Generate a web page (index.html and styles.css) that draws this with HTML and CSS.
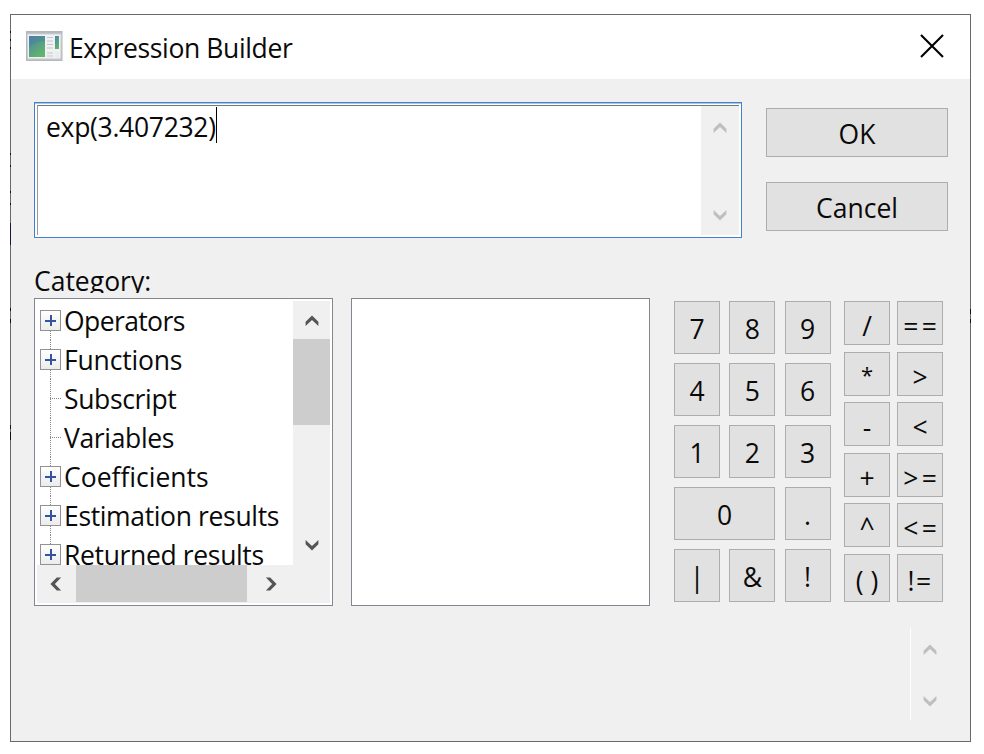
FILE: index.html
```
<!DOCTYPE html>
<html lang="en">
<head>
<meta charset="utf-8">
<title>Expression Builder</title>
<link rel="stylesheet" href="styles.css">
</head>
<body>
<svg width="0" height="0" class="defs">
  <symbol id="up" viewBox="0 0 14 12"><path d="M0.6 6.8 7 0.4l6.4 6.4v4.3L7 4.9 0.6 11.1z" fill="currentColor"/></symbol>
  <symbol id="down" viewBox="0 0 14 12"><path d="M0.6 5.2 7 11.6l6.4-6.4V0.9L7 7.1 0.6 0.9z" fill="currentColor"/></symbol>
  <symbol id="left" viewBox="0 0 12 14"><path d="M6.8 0.6 0.4 7l6.4 6.4h4.3L4.9 7l6.2-6.4z" fill="currentColor"/></symbol>
  <symbol id="right" viewBox="0 0 12 14"><path d="M5.2 0.6 11.6 7l-6.4 6.4H0.9L7.1 7 0.9 0.6z" fill="currentColor"/></symbol>
  <linearGradient id="pane" x1="0" y1="0" x2="0.6" y2="1"><stop offset="0" stop-color="#4b82a6"/><stop offset="1" stop-color="#62b56c"/></linearGradient>
  <linearGradient id="frame" x1="0" y1="0" x2="0" y2="1"><stop offset="0" stop-color="#a9afb6"/><stop offset="0.12" stop-color="#d3d6da"/><stop offset="1" stop-color="#c2c4ca"/></linearGradient>
</svg>
<main class="window">
  <header class="titlebar">
    <svg class="app-icon" width="37" height="31" viewBox="0 0 37 31">
      <rect x="0.5" y="0.5" width="35.500" height="29" fill="url(#frame)" stroke="#b4b7bd"/>
      <rect x="2" y="3.500" width="32.500" height="24" fill="#f0f1f2"/>
      <rect x="3" y="5" width="16" height="21" fill="url(#pane)"/>
      <path d="M3 16Q10 10 19 10V5H3z" fill="#477da4" opacity=".4"/>
      <path d="M21 6.500h6M21 10h6M21 13.500h6M21 17h6M21 22h6M21 25h6" stroke="#c5c8cb"/>
      <rect x="29" y="5" width="4" height="13" fill="url(#pane)"/>
      <path d="M29 22h4M29 25h4" stroke="#dfe1e3"/>
    </svg>
    <h1 class="title">Expression Builder</h1>
    <svg class="close" width="24" height="24" viewBox="0 0 24 24"><path d="M1 1 23 23M23 1 1 23" stroke="#000" stroke-width="2.100"/></svg>
  </header>
  <div class="content">
    <section class="top">
      <div class="editor">
        <div class="editor-text"><span class="expr">exp(3.407232)</span><i class="caret"></i></div>
        <div class="editor-scroll">
          <svg width="14" height="12"><use href="#up"/></svg>
          <svg width="14" height="12"><use href="#down"/></svg>
        </div>
      </div>
      <div class="actions">
        <button class="btn">OK</button>
        <button class="btn">Cancel</button>
      </div>
    </section>
    <div class="label">Category:</div>
    <section class="main">
      <div class="tree">
        <ul class="rows">
          <li class="node first"><i class="box"></i><span class="tightest">Operators</span></li>
          <li class="node"><i class="box"></i><span class="snug">Functions</span></li>
          <li class="leaf"><span class="tight">Subscript</span></li>
          <li class="leaf"><span class="tight">Variables</span></li>
          <li class="node"><i class="box"></i><span>Coefficients</span></li>
          <li class="node"><i class="box"></i><span class="tight">Estimation results</span></li>
          <li class="node"><i class="box"></i><span class="tight">Returned results</span></li>
        </ul>
        <div class="vscroll">
          <svg width="14" height="12"><use href="#up"/></svg>
          <div class="vthumb"></div>
          <svg class="end" width="14" height="12"><use href="#down"/></svg>
        </div>
        <div class="hscroll">
          <svg width="12" height="14"><use href="#left"/></svg>
          <div class="hthumb"></div>
          <svg width="12" height="14"><use href="#right"/></svg>
        </div>
      </div>
      <div class="list"></div>
      <div class="digits">
        <button class="btn">7</button><button class="btn">8</button><button class="btn">9</button>
        <button class="btn">4</button><button class="btn">5</button><button class="btn">6</button>
        <button class="btn">1</button><button class="btn">2</button><button class="btn">3</button>
        <button class="btn zero">0</button><button class="btn">.</button>
        <button class="btn">|</button><button class="btn">&amp;</button><button class="btn">!</button>
      </div>
      <div class="ops">
        <button class="btn">/</button><button class="btn wide">==</button>
        <button class="btn star">*</button><button class="btn">&gt;</button>
        <button class="btn">-</button><button class="btn">&lt;</button>
        <button class="btn">+</button><button class="btn wide">&gt;=</button>
        <button class="btn caret-key">^</button><button class="btn wide">&lt;=</button>
        <button class="btn paren">()</button><button class="btn ne">!=</button>
      </div>
    </section>
    <footer class="status">
      <div class="status-scroll">
        <svg width="14" height="12"><use href="#up"/></svg>
        <svg width="14" height="12"><use href="#down"/></svg>
      </div>
    </footer>
  </div>
</main>
</body>
</html>
```

FILE: styles.css
```
* { box-sizing: border-box; margin: 0; padding: 0; }
body { background: #fff; font-family: "Open Sans", "Noto Sans", sans-serif; font-size: 26.5px; color: #0a0a0a; overflow: hidden; }
.defs { position: absolute; }
svg { display: block; flex: none; }
.window { margin: 14px 0 0 10px; width: 961px; height: 728px; border: 1px solid #69696b; background: #f0f0f0; position: relative; }
/* dark specks on the window's outer edges */
.window::before { content: ""; position: absolute; left: -1px; top: 0; width: 1px; height: 440px;
  background: linear-gradient(#111, #111) 0 16px / 1px 2px, linear-gradient(#111, #111) 0 24px / 1px 2px, linear-gradient(#111, #111) 0 32px / 1px 2px, linear-gradient(#111, #111) 0 138px / 1px 2px, linear-gradient(#111, #111) 0 150px / 1px 2px, linear-gradient(#111, #111) 0 176px / 1px 2px, linear-gradient(#111, #111) 0 188px / 1px 2px, linear-gradient(#17173f, #17173f) 0 208px / 1px 22px, linear-gradient(#111, #111) 0 293px / 1px 3px, linear-gradient(#111, #111) 0 304px / 1px 4px, linear-gradient(#111, #111) 0 410px / 1px 4px, linear-gradient(#111, #111) 0 417px / 1px 8px;
  background-repeat: no-repeat; }
.window::after { content: ""; position: absolute; right: -1px; top: 294px; width: 1px; height: 14px; background: linear-gradient(#111 5px, transparent 5px 10px, #111 10px); }
.titlebar { height: 64px; background: #fff; display: flex; align-items: flex-start; padding: 16px 26px 0 15px; }
.title { font-size: inherit; font-weight: 400; line-height: 34px; padding-left: 6px; flex: 1; white-space: nowrap; letter-spacing: -0.38px; }
.close { margin-top: 3px; }
.content { padding: 23px 22px 0 23px; }
.top { display: flex; height: 136px; justify-content: space-between; }
.editor { width: 708px; height: 136px; border: 1px solid #4381cb; padding: 1px 2px 2px; background: #fff; box-shadow: inset 0 1px #a6c8ee; display: flex; }
.editor-text { flex: 1; border-top: 1px solid #777; border-left: 1px solid #999; margin-top: 1px; padding: 1px 0 0 8px; line-height: 41px; display: flex; height: 130px; }
.expr { letter-spacing: -0.3px; }
.caret { width: 1px; height: 36px; background: #000; }
.editor-scroll { width: 38px; margin-top: 1px; border-top: 1px solid #777; background: #f0f0f0; display: flex; flex-direction: column; align-items: center; justify-content: space-between; padding: 16px 0 14px; color: #bfbfbf; }
.actions { display: flex; flex-direction: column; gap: 25px; padding-top: 6px; }
.btn { border: 1px solid #adadad; background: #e1e1e1; font: inherit; color: inherit; display: flex; align-items: center; justify-content: center; white-space: nowrap; min-width: 0; overflow: hidden; }
.actions .btn { width: 182px; height: 49px; padding-top: 3px; }
.label { margin-top: 27px; height: 28px; line-height: 33px; overflow: hidden; }
.main { margin-top: 5px; display: flex; height: 308px; }
.tree { width: 299px; border: 1px solid #828790; background: #f0f0f0; box-shadow: inset 0 0 0 2px #fff; display: grid; grid-template: 264px 37px / 256px 37px; padding: 2px; }
.rows { list-style: none; background: #fff; overflow: hidden; }
.rows li { height: 39px; display: flex; align-items: center; line-height: 39px; white-space: nowrap; padding-left: 3px;
  background: repeating-linear-gradient(#888 0 1px, transparent 1px 2px) 13px 0 / 1px 39px no-repeat; }
.rows .first { background-position: 13px 20px; }
.rows li span { margin-left: 3px; padding-top: 2px; }
.rows .tightest { letter-spacing: -0.6px; }
.rows .tight { letter-spacing: -0.35px; }
.rows .snug { letter-spacing: -0.18px; }
.box { width: 21px; height: 21px; border: 1px solid #929292; background: linear-gradient(#34549f, #34549f) center / 11px 2px no-repeat, linear-gradient(#34549f, #34549f) center / 2px 11px no-repeat, linear-gradient(#fff, #ececec); flex: none; }
.leaf::before { content: ""; width: 11px; height: 1px; margin-left: 10px; background: repeating-linear-gradient(90deg, #888 0 1px, transparent 1px 2px); }
.vscroll { display: flex; flex-direction: column; align-items: center; padding: 14px 0; color: #555; }
.vthumb { width: 37px; height: 86px; background: #cdcdcd; margin-top: 12px; }
.end { margin-top: auto; }
.hscroll { display: flex; align-items: center; color: #555; padding-left: 13px; }
.hthumb { width: 171px; height: 37px; background: #cdcdcd; margin: 0 18px 0 14px; }
.list { width: 299px; margin-left: 18px; border: 1px solid #828790; background: #fff; }
.digits { margin: 3px 0 0 24px; display: grid; grid-template-columns: repeat(3, 46px); grid-auto-rows: 53px; gap: 9px 9.3px; height: 301px; }
.digits .btn { padding-top: 3px; }
.zero { grid-column: span 2; }
.ops { margin: 3px 0 0 13.5px; display: grid; grid-template-columns: 46px 46px; grid-template-rows: repeat(5, 44px) 48px; gap: 6.500px 7px; height: 301px; }
.ops .btn { padding-top: 6px; }
.ops .star { font-size: 22px; padding-top: 0; }
.ops .caret-key { padding-top: 4px; }
.wide { letter-spacing: 3.5px; padding-left: 3.5px; }
.paren { letter-spacing: 7px; padding-left: 7px; }
.ne { letter-spacing: 1.5px; }
.status { height: 92px; margin-top: 22px; display: flex; justify-content: flex-end; }
.status-scroll { width: 38px; border-left: 1px solid #fff; display: flex; flex-direction: column; align-items: center; justify-content: space-between; padding: 16px 0 13px 1px; color: #bfbfbf; }
```
